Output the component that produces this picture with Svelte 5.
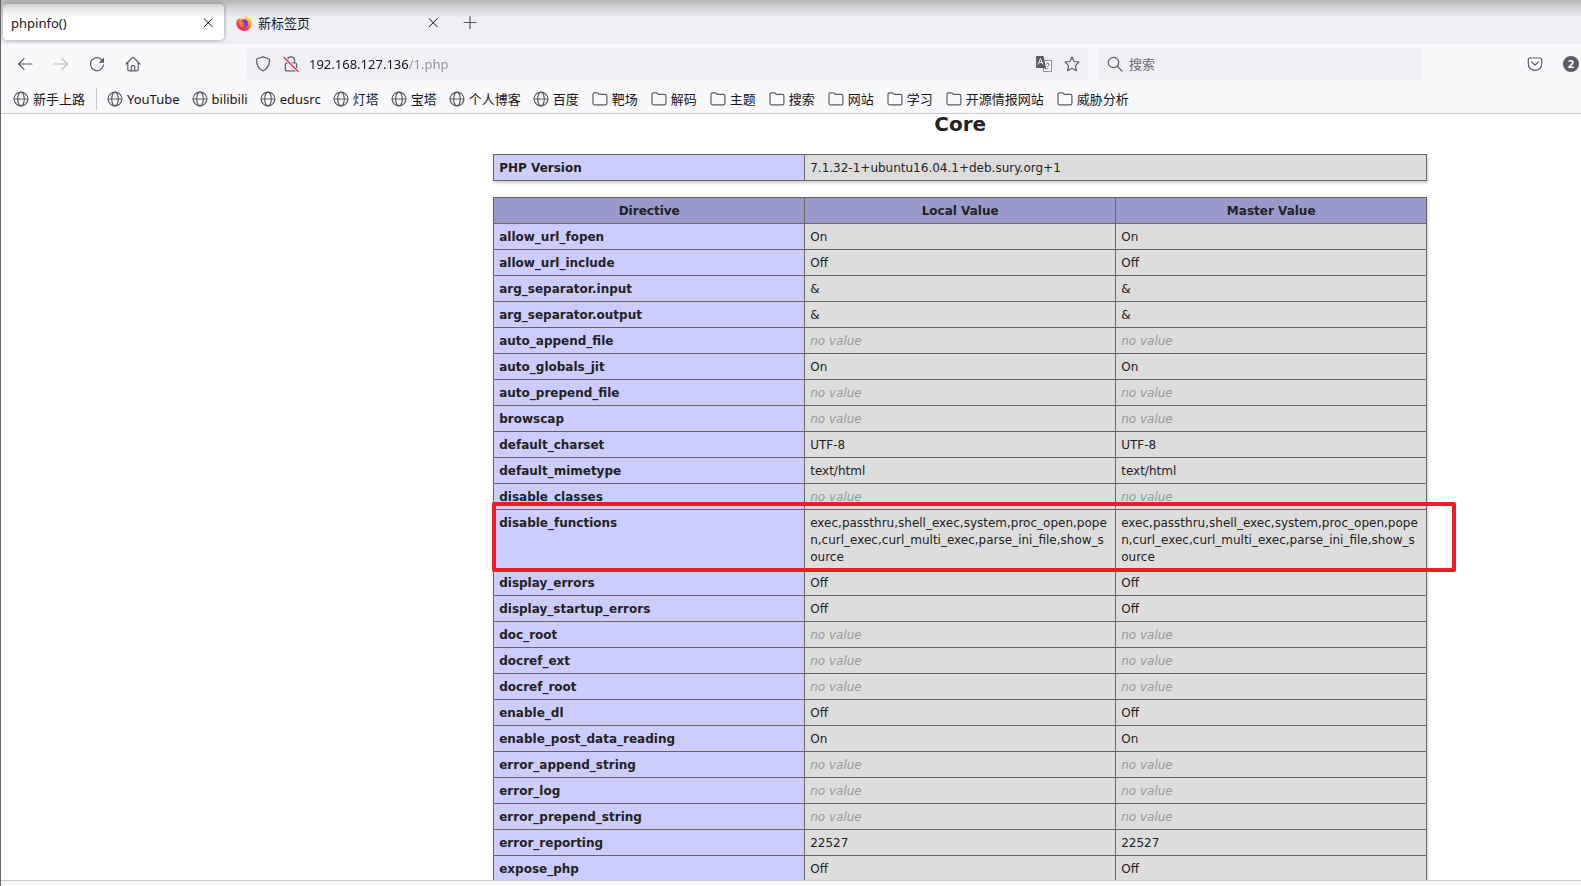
<script lang="ts">
  type Directive = { name: string; value: string | null; marked?: boolean };

  const links = ['YouTube', 'bilibili', 'edusrc', '灯塔', '宝塔', '个人博客', '百度'];
  const folders = ['靶场', '解码', '主题', '搜索', '网站', '学习', '开源情报网站', '威胁分析'];

  const disabled =
    'exec,passthru,shell_exec,system,proc_open,popen,curl_exec,curl_multi_exec,parse_ini_file,show_source';

  // local and master values are the same for every directive
  const directives: Directive[] = [
    { name: 'allow_url_fopen', value: 'On' },
    { name: 'allow_url_include', value: 'Off' },
    { name: 'arg_separator.input', value: '&' },
    { name: 'arg_separator.output', value: '&' },
    { name: 'auto_append_file', value: null },
    { name: 'auto_globals_jit', value: 'On' },
    { name: 'auto_prepend_file', value: null },
    { name: 'browscap', value: null },
    { name: 'default_charset', value: 'UTF-8' },
    { name: 'default_mimetype', value: 'text/html' },
    { name: 'disable_classes', value: null },
    { name: 'disable_functions', value: disabled, marked: true },
    { name: 'display_errors', value: 'Off' },
    { name: 'display_startup_errors', value: 'Off' },
    { name: 'doc_root', value: null },
    { name: 'docref_ext', value: null },
    { name: 'docref_root', value: null },
    { name: 'enable_dl', value: 'Off' },
    { name: 'enable_post_data_reading', value: 'On' },
    { name: 'error_append_string', value: null },
    { name: 'error_log', value: null },
    { name: 'error_prepend_string', value: null },
    { name: 'error_reporting', value: '22527' },
    { name: 'expose_php', value: 'Off' },
  ];

  let url = $state('192.168.127.136/1.php');
  let query = $state('');
</script>

{#snippet globe()}
  <svg class="icon" viewBox="0 0 16 16" aria-hidden="true">
    <circle cx="8" cy="8" r="6.9" />
    <ellipse cx="8" cy="8" rx="3.3" ry="6.9" />
    <path d="M1.2 8h13.6" />
  </svg>
{/snippet}

{#snippet folder()}
  <svg class="icon" viewBox="0 0 16 16" aria-hidden="true">
    <path d="M1 12.6V3.2Q1 1.8 2.4 1.8h2.8q.6 0 1 .4l1.1 1.2h6q1.6 0 1.6 1.6v7.2q0 1.6-1.6 1.6H2.6Q1 13.8 1 12.6z" />
  </svg>
{/snippet}

{#snippet cross()}
  <svg class="icon" viewBox="0 0 16 16" aria-hidden="true">
    <path d="M4.2 3.7l8 8M12.2 3.7l-8 8" />
  </svg>
{/snippet}

<div class="browser">
  <div class="top-shade"></div>

  <div class="tabs">
    <div class="tab active">
      <button class="tab-label">phpinfo()</button>
      <button class="close" aria-label="关闭标签页">{@render cross()}</button>
    </div>
    <div class="tab">
      <button class="tab-label">
        <svg class="firefox" viewBox="0 0 16 16" aria-hidden="true">
          <defs>
            <linearGradient id="flame" x1="0.85" y1="0.05" x2="0.25" y2="1">
              <stop offset="0" stop-color="#fff44f" />
              <stop offset="0.35" stop-color="#ffa01e" />
              <stop offset="0.65" stop-color="#ff4a3a" />
              <stop offset="1" stop-color="#f0107a" />
            </linearGradient>
          </defs>
          <path
            fill="url(#flame)"
            d="M10.1.3c.3 1.3 1 2 2.2 2.9.4-.2.5-.5.5-.9 1.9 1.5 3 3.6 3 6A7.75 7.5 0 0 1 .3 8.6C.2 6.5.9 4.8 1.8 3.7c.1.5.3.8.6 1 .3-.9.9-1.6 1.7-2 0 .5.2.9.5 1.200 1-.1 1.9 0 2.7.4C8.1 3.8 9.6 2.5 10.1.3z"
          />
          <circle cx="8" cy="8.3" r="3.9" fill="#8a3fe0" />
          <path fill="#5b45d8" d="M6 5.2c2-1.2 5-.4 5.8 2.2.5 2-.6 4-2.3 4.6C11 9 9.3 6.8 6 5.2z" />
          <path fill="#ff8a16" d="M2.7 5.2c1.2-.9 2.6-1 4.1-.4-.1.8-1.2 1.5-1.7 1.9.8.5 1.7.6 2.4.9.5.2-.2 1.2-1.3 1.5.5.9 1.8 1.2 3.1.5-1 2.4-4.6 2.6-5.7.3-.7-1.5-.8-3.2-.9-4.7z" />
        </svg>
        新标签页
      </button>
      <button class="close" aria-label="关闭标签页">{@render cross()}</button>
    </div>
    <button class="new-tab" aria-label="打开新标签页">
      <svg class="icon" viewBox="0 0 16 16" aria-hidden="true"><path d="M8 2.500v12M2 8.500h12" /></svg>
    </button>
  </div>

  <div class="nav">
    <div class="nav-buttons">
      <button aria-label="后退">
        <svg class="icon" viewBox="0 0 16 16" aria-hidden="true"><path d="M15 8H1.8M7 2.6L1.5 8 7 13.4" /></svg>
      </button>
      <button aria-label="前进" disabled>
        <svg class="icon" viewBox="0 0 16 16" aria-hidden="true"><path d="M1 8h13.2M9 2.6L14.5 8 9 13.4" /></svg>
      </button>
      <button aria-label="刷新">
        <svg class="icon" viewBox="0 0 16 16" aria-hidden="true">
          <path d="M13.5 4.600A6.5 6.5 0 1 0 14.5 8.8" />
          <path class="solid" d="M15 1.4v5.4H9.6z" />
        </svg>
      </button>
      <button aria-label="主页">
        <svg class="icon" viewBox="0 0 16 16" aria-hidden="true">
          <path d="M1 8l6.3-6.2q.7-.6 1.4 0L15 8M2.8 6.8v6.4q0 1.6 1.6 1.6h7.2q1.6 0 1.6-1.6V6.8M6.3 14.6v-4q0-1 1-1h1.4q1 0 1 1v4" />
        </svg>
      </button>
    </div>

    <div class="field url">
      <div class="group">
        <svg class="icon" viewBox="0 0 16 16" aria-hidden="true">
          <path d="M8 .9L13.7 2.7q.8.3.8 1.1c0 5.2-2.2 9.2-6.5 11.2C3.7 13 1.5 9 1.5 3.8q0-.8.8-1.1z" />
        </svg>
        <svg class="icon" viewBox="0 0 16 16" aria-hidden="true">
          <path d="M4.5 7V4.4a3.5 3.5 0 0 1 7 0V7M3.6 7h8.8q1.2 0 1.2 1.2v5.2q0 1.4-1.4 1.4H3.8q-1.4 0-1.4-1.4V8.2Q2.4 7 3.6 7z" />
          <path class="slash-gap" d="M1 1.5L15 15.5" />
          <path class="slash" d="M1 1.5L15 15.5" />
        </svg>
      </div>
      <input class="address" type="text" aria-label="地址" bind:value={url} />
      <div class="group">
        <button aria-label="翻译此页">
          <svg class="translate" viewBox="0 0 16 16" aria-hidden="true">
            <path fill="#f9f9fb" stroke="#8f8f9d" d="M7 4.5h8.5v11h-8v-4" />
            <path fill="#5b5b66" d="M1 0h6.5L10.5 14 8 12H1q-1 0-1-1V1q0-1 1-1z" />
            <path fill="none" stroke="#e8e8ee" d="M2 8.5L4.5 2.5 7 8.5M3 6.5h3" />
            <path fill="none" stroke="#6b6b76" d="M10.5 8q1.5-1.5 2.5 0 .3 1.2-1.2 2v1M11.8 12v1.2" />
          </svg>
        </button>
        <button aria-label="添加书签">
          <svg class="icon" viewBox="0 0 16 16" aria-hidden="true">
            <path d="M8 1.1L10.1 5.5 14.9 6.2 11.5 9.6 12.3 14.7 8 12.3 3.7 14.7 4.5 9.6 1.1 6.2 5.9 5.5z" />
          </svg>
        </button>
      </div>
    </div>

    <div class="field search">
      <svg class="icon" viewBox="0 0 16 16" aria-hidden="true">
        <circle cx="6.5" cy="6.5" r="5.2" />
        <path d="M10.3 10.3L15 15" />
      </svg>
      <input type="text" aria-label="搜索" placeholder="搜索" bind:value={query} />
    </div>

    <div class="extras">
      <button aria-label="Pocket">
        <svg class="icon" viewBox="0 0 16 16" aria-hidden="true">
          <path d="M2.6 2h10.8q1.3 0 1.3 1.3V8a6.7 6.4 0 0 1-13.4 0V3.3Q1.3 2 2.6 2zM4.8 6L8 9.2 11.2 6" />
        </svg>
      </button>
      <button class="badge">2</button>
    </div>
  </div>

  <div class="bookmarks">
    <a href="#start">{@render globe()}新手上路</a>
    <span class="divider"></span>
    <div class="links">
      {#each links as label (label)}
        <a href="#{label}">{@render globe()}{label}</a>
      {/each}
    </div>
    <div class="folders">
      {#each folders as label (label)}
        <button>{@render folder()}{label}</button>
      {/each}
    </div>
  </div>

  <main class="page">
    <div class="content">
      <h2>Core</h2>
      <table>
        <tbody>
          <tr>
            <th class="name" scope="row">PHP Version</th>
            <td colspan="2">7.1.32-1+ubuntu16.04.1+deb.sury.org+1</td>
          </tr>
        </tbody>
      </table>

      <table>
        <thead>
          <tr>
            <th scope="col">Directive</th>
            <th scope="col">Local Value</th>
            <th scope="col">Master Value</th>
          </tr>
        </thead>
        <tbody>
          {#each directives as row (row.name)}
            <tr class:marked={row.marked}>
              <th class="name" scope="row">
                {row.name}
                {#if row.marked}<span class="marker"></span>{/if}
              </th>
              {#each ['local', 'master'] as scope (scope)}
                <td>{#if row.value === null}<i>no value</i>{:else}{row.value}{/if}</td>
              {/each}
            </tr>
          {/each}
        </tbody>
      </table>
    </div>
  </main>
  <div class="status"></div>
</div>

<style>
  :global(body) {
    margin: 0;
  }

  .browser {
    position: relative;
    box-sizing: border-box;
    display: flex;
    flex-direction: column;
    height: 100vh;
    overflow: hidden;
    border-left: 1px solid #646468;
    background: #f9f9fb;
    color: #15141a;
    font: 13px/18px 'Noto Sans', 'Noto Sans CJK SC', sans-serif;
  }

  .top-shade {
    position: absolute;
    inset: 0 0 auto;
    z-index: 1;
    height: 18px;
    background: linear-gradient(rgba(0, 0, 0, 0.25), rgba(0, 0, 0, 0.12) 40%, transparent);
    pointer-events: none;
  }

  button,
  input {
    margin: 0;
    padding: 0;
    border: 0;
    background: none;
    color: inherit;
    font: inherit;
  }

  button {
    display: flex;
    align-items: center;
    justify-content: center;
  }

  .icon {
    flex: none;
    width: 16px;
    height: 16px;
    fill: none;
    stroke: #5b5b66;
    stroke-width: 1.2;
    stroke-linejoin: round;
    stroke-linecap: round;
  }

  .solid {
    fill: #5b5b66;
    stroke: none;
  }

  .tabs {
    display: flex;
    flex: none;
    gap: 4px;
    box-sizing: border-box;
    height: 44px;
    padding: 4px 2px;
    background: #f0f0f4;
  }

  .tab {
    display: flex;
    align-items: center;
    box-sizing: border-box;
    width: 221px;
    height: 36px;
    padding: 2px 8px 0;
    border-radius: 4px;
  }

  .tab.active {
    background: #fff;
    box-shadow: 0 0 4px rgba(0, 0, 0, 0.4);
  }

  .tab-label {
    flex: 1;
    justify-content: flex-start;
    gap: 6px;
    height: 34px;
  }

  .firefox {
    width: 16px;
    height: 16px;
  }

  .close .icon {
    stroke: #15141a;
    stroke-width: 1;
  }

  .new-tab {
    width: 34px;
  }

  .nav {
    display: flex;
    flex: none;
    align-items: center;
    height: 40px;
  }

  .nav-buttons {
    display: flex;
    gap: 4px;
    width: 238px;
    padding-left: 8px;
  }

  .nav-buttons button {
    width: 32px;
    height: 32px;
  }

  .nav-buttons button:disabled {
    opacity: 0.4;
  }

  .field {
    display: flex;
    align-items: center;
    box-sizing: border-box;
    height: 32px;
    padding: 0 8px;
    border-radius: 4px;
    background: #f0f0f4;
  }

  .field input {
    flex: 1;
    min-width: 0;
    height: 32px;
    outline: none;
  }

  .url {
    flex: 1;
    gap: 10px;
  }

  .group {
    display: flex;
    gap: 12px;
  }

  /* host in full strength, path dimmed */
  .address {
    background: linear-gradient(90deg, #15141a 100px, #8f8f9d 100px);
    -webkit-background-clip: text;
    background-clip: text;
    -webkit-text-fill-color: transparent;
  }

  .slash-gap {
    stroke: #f0f0f4;
    stroke-width: 3;
  }

  .slash {
    stroke: #e22850;
  }

  .translate {
    width: 16px;
    height: 16px;
  }

  .search {
    gap: 6px;
    width: 323px;
    margin-left: 10px;
    padding: 0 9px;
  }

  .search input::placeholder {
    color: #6b6b74;
    opacity: 1;
  }

  .extras {
    display: flex;
    align-items: center;
    justify-content: flex-end;
    gap: 20px;
    box-sizing: border-box;
    width: 160px;
    padding-right: 2px;
  }

  .badge {
    width: 16px;
    height: 16px;
    border-radius: 50%;
    background: #5b5b66;
    color: #fff;
    font-size: 11px;
    font-weight: 700;
    line-height: 16px;
  }

  .bookmarks {
    display: flex;
    flex: none;
    align-items: center;
    gap: 13px;
    height: 29px;
    padding-left: 12px;
    border-bottom: 1px solid #ccccd0;
    white-space: nowrap;
  }

  .links,
  .folders {
    display: flex;
    gap: 12px;
  }

  .folders {
    gap: 13px;
  }

  .bookmarks a,
  .bookmarks button {
    display: flex;
    align-items: center;
    gap: 4px;
    color: inherit;
    text-decoration: none;
  }

  .divider {
    width: 1px;
    height: 22px;
    margin: 0 -3px 0 -2px;
    background: #cacace;
  }

  .page {
    display: grid;
    flex: 1;
    grid-template-columns: 16fr minmax(0, 934px) 5fr;
    min-height: 0;
    overflow: hidden;
    background: #fff;
    color: #222;
    font: 12px/17px 'DejaVu Sans', sans-serif;
  }

  .content {
    grid-column: 2;
  }

  h2 {
    margin: 0 0 20px;
    font-size: 20px;
    line-height: 20px;
    text-align: center;
  }

  table {
    width: 100%;
    margin-bottom: 16px;
    border-collapse: collapse;
    table-layout: fixed;
    box-shadow: 1px 2px 3px #ccc;
  }

  th,
  td {
    padding: 5px 5px 3px;
    border: 1px solid #666;
    vertical-align: baseline;
  }

  th {
    background: #99c;
  }

  .name {
    background: #ccf;
    text-align: left;
  }

  td {
    background: #ddd;
    overflow-wrap: break-word;
  }

  i {
    color: #999;
  }

  .marked {
    position: relative;
  }

  .marker {
    position: absolute;
    inset: -8px -29px -2px -2px;
    border: 4px solid #ee1c25;
    border-radius: 2px;
  }

  .status {
    flex: none;
    height: 5px;
    border-top: 1px solid #ccc;
    background: #f9f9fa;
  }
</style>
